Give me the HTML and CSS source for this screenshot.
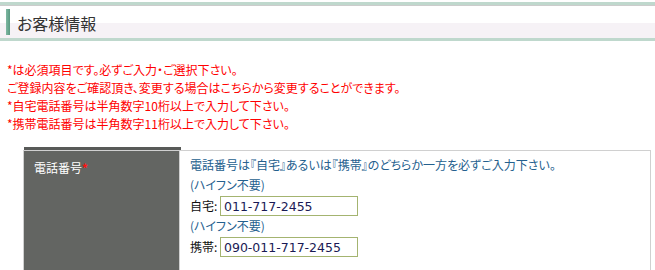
FILE: index.html
```html
<!DOCTYPE html>
<html lang="ja">
<head>
<meta charset="utf-8">
<link rel="stylesheet" href="styles.css">
</head>
<body>
<h2 class="title"><span class="title-bar"></span><span class="title-text">お客様情報</span></h2>
<div class="notes">
  <p>*は必須項目です。必ずご入力・ご選択下さい。</p>
  <p>ご登録内容をご確認頂き、変更する場合はこちらから変更することができます。</p>
  <p>*自宅電話番号は半角数字10桁以上で入力して下さい。</p>
  <p>*携帯電話番号は半角数字11桁以上で入力して下さい。</p>
</div>
<div class="form">
  <div class="strip"></div>
  <div class="row">
    <div class="th">電話番号<span class="req">*</span></div>
    <div class="td">
      <p class="line info">電話番号は『自宅』あるいは『携帯』のどちらか一方を必ずご入力下さい。</p>
      <p class="line info">(ハイフン不要)</p>
      <div class="field"><label class="lbl">自宅:</label><input class="inp" type="text" value="011-717-2455"></div>
      <p class="line info">(ハイフン不要)</p>
      <div class="field"><label class="lbl">携帯:</label><input class="inp" type="text" value="090-011-717-2455"></div>
    </div>
  </div>
</div>
</body>
</html>
```
FILE: styles.css
```css
* { box-sizing: border-box; }
body {
  margin: 0;
  font-family: "Noto Sans CJK JP", "Noto Sans", sans-serif;
  font-size: 12px;
  background: #fff;
}
p { margin: 0; }
.title {
  margin: 2px 0 0;
  height: 39px;
  border-top: 3px solid #bfd8cd;
  border-bottom: 3px solid #bfd8cd;
  background: linear-gradient(#cccccc 0 1px, #ffffff 1px 18px, #f6f2f6 18px);
  display: flex;
  align-items: center;
  padding-left: 6px;
  gap: 7px;
  font-weight: normal;
  font-size: 16px;
  color: #333333;
}
.title-bar {
  width: 4px;
  height: 26px;
  background: linear-gradient(90deg, #7fb8a2, #5a9a82);
}
.title-text {
  line-height: 20px;
  padding-top: 2px;
  font-feature-settings: "palt";
}
.notes {
  margin-top: 20px;
  padding-left: 7px;
  color: #ff0000;
  line-height: 18px;
  font-feature-settings: "palt";
}
.form {
  margin: 14px 0 0 23px;
  width: 628px;
}
.strip {
  margin-left: 1px;
  width: 157px;
  height: 3px;
  background: #585a58;
}
.row {
  display: flex;
  border: 1px solid #d0d0d0;
  border-bottom: none;
  height: 120px;
}
.th {
  width: 156px;
  background: #636562;
  color: #fff;
  padding: 8px 0 0 10px;
  line-height: 18px;
  border-right: 1px solid #d0d0d0;
  font-feature-settings: "palt";
}
.req { color: #ff1010; font-weight: bold; }
.td {
  flex: 1;
  padding: 4px 0 0 10px;
  font-feature-settings: "palt";
}
.line { height: 20px; line-height: 20px; }
.info { color: #24608e; }
.field {
  height: 21px;
  display: flex;
  align-items: flex-start;
  padding-top: 1px;
  color: #111;
}
.lbl { width: 30px; line-height: 20px; }
.inp {
  width: 138px;
  height: 20px;
  border: 1px solid #a4b470;
  padding: 0 0 0 3px;
  font-family: "DejaVu Sans", Verdana, sans-serif;
  font-size: 12.5px;
  color: #1a1a55;
  background: #fff;
  outline: none;
}
```
